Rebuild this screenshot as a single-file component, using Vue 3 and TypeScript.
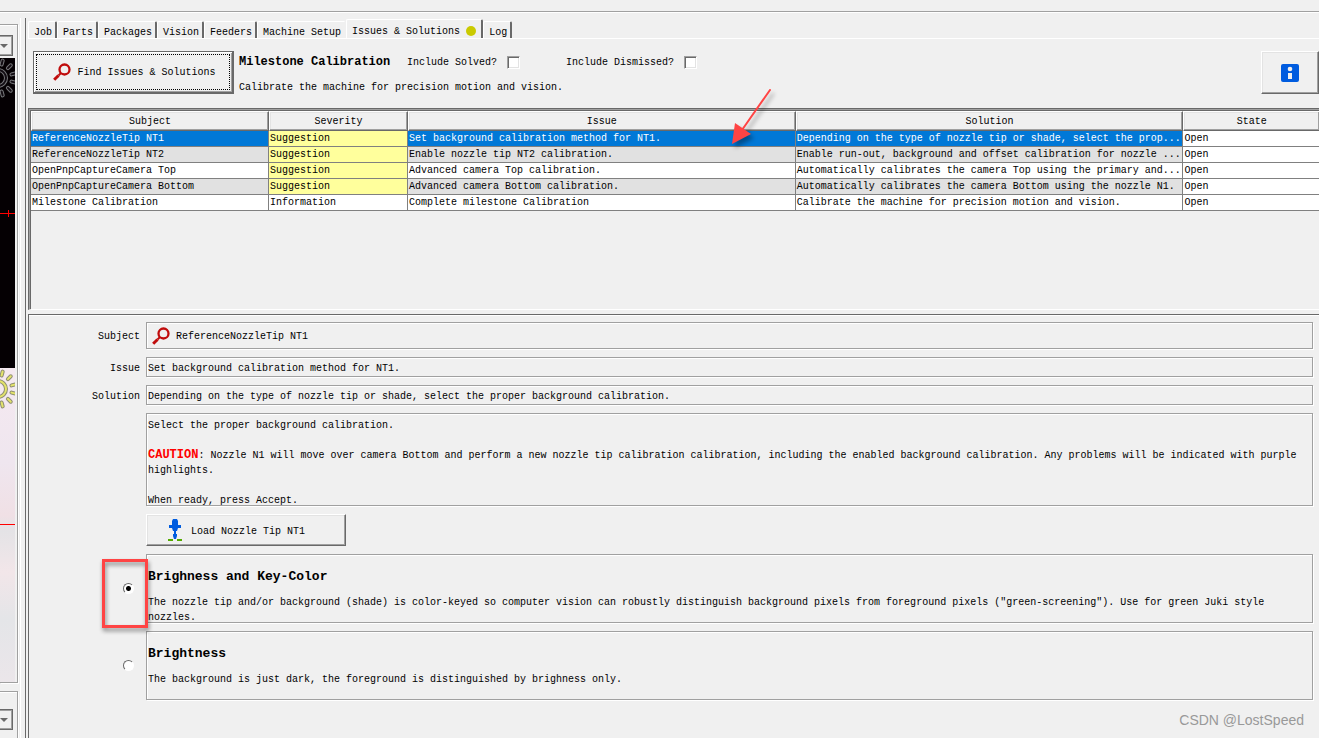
<script setup lang="ts">
import { ref } from 'vue'

interface Issue {
  subject: string
  severity: string
  issue: string
  solution: string
  state: string
}

const tabs: string[] = ['Job', 'Parts', 'Packages', 'Vision', 'Feeders', 'Machine Setup', 'Issues & Solutions', 'Log']
const activeTab = ref('Issues & Solutions')
const selectedRow = ref(0)
const method = ref('key-color')
const includeSolved = ref(false)
const includeDismissed = ref(false)

const issues: Issue[] = [
  { subject: 'ReferenceNozzleTip NT1', severity: 'Suggestion', issue: 'Set background calibration method for NT1.', solution: 'Depending on the type of nozzle tip or shade, select the prop...', state: 'Open' },
  { subject: 'ReferenceNozzleTip NT2', severity: 'Suggestion', issue: 'Enable nozzle tip NT2 calibration.', solution: 'Enable run-out, background and offset calibration for nozzle ...', state: 'Open' },
  { subject: 'OpenPnpCaptureCamera Top', severity: 'Suggestion', issue: 'Advanced camera Top calibration.', solution: 'Automatically calibrates the camera Top using the primary and...', state: 'Open' },
  { subject: 'OpenPnpCaptureCamera Bottom', severity: 'Suggestion', issue: 'Advanced camera Bottom calibration.', solution: 'Automatically calibrates the camera Bottom using the nozzle N1.', state: 'Open' },
  { subject: 'Milestone Calibration', severity: 'Information', issue: 'Complete milestone Calibration', solution: 'Calibrate the machine for precision motion and vision.', state: 'Open' },
]

const rays: number[] = [-75, -45, -15, 15, 45, 75]
</script>

<template>
  <div class="window">
    <div class="toolbar-edge"></div>
    <div class="body">
      <aside class="cameras">
        <div class="camera-box first">
          <button class="combo" type="button" aria-label="Top camera"><svg width="8" height="4" viewBox="0 0 8 4"><path d="M0 0h8L4 4z" fill="#696969" /></svg></button>
          <div class="view dark">
            <svg class="sun" width="15" height="44" viewBox="0 0 15 44" fill="none">
              <g stroke="#77777a">
                <circle cx="-2" cy="20" r="8" stroke-width="4" />
                <path v-for="a in rays" :key="a" d="M12 20h4" stroke-width="4" stroke-linecap="round" :transform="`rotate(${a} -2 20)`" />
              </g>
              <g stroke="#120c12" stroke-width="2">
                <circle cx="-2" cy="20" r="8" />
                <path v-for="a in rays" :key="a" d="M12 20h4" stroke-linecap="round" :transform="`rotate(${a} -2 20)`" />
              </g>
            </svg>
            <svg class="cross" width="15" height="9" viewBox="0 0 15 9" shape-rendering="crispEdges"><path d="M0 4h15v1H0zM8 1h1v7H8z" fill="#f00" /></svg>
          </div>
          <div class="view light">
            <svg class="sun" width="15" height="44" viewBox="0 0 15 44" fill="none">
              <g stroke="#8e8e74">
                <circle cx="-2" cy="21" r="8" stroke-width="4" />
                <path v-for="a in rays" :key="a" d="M12 21h4" stroke-width="4" stroke-linecap="round" :transform="`rotate(${a} -2 21)`" />
              </g>
              <g stroke="#e4e46a" stroke-width="2">
                <circle cx="-2" cy="21" r="8" />
                <path v-for="a in rays" :key="a" d="M12 21h4" stroke-linecap="round" :transform="`rotate(${a} -2 21)`" />
              </g>
            </svg>
            <div class="reticle"></div>
          </div>
        </div>
        <div class="camera-box second">
          <button class="combo" type="button" aria-label="Bottom camera"><svg width="8" height="4" viewBox="0 0 8 4"><path d="M0 0h8L4 4z" fill="#696969" /></svg></button>
        </div>
      </aside>

      <main class="content">
        <nav class="tabs" role="tablist">
          <button v-for="t in tabs" :key="t" class="tab" :class="{ active: t === activeTab }" type="button" role="tab" :aria-selected="t === activeTab" @click="activeTab = t">
            {{ t }}<span v-if="t === 'Issues & Solutions'" class="dot"></span>
          </button>
        </nav>

        <header class="actions">
          <button class="find" type="button">
            <span class="focus">
              <svg width="18" height="18" viewBox="0 0 18 18" fill="none" stroke="#c00c0c"><circle cx="11.500" cy="6.500" r="5" stroke-width="2.300" /><path d="M8 10L5.500 12.500" stroke-width="2" /><path d="M5.500 12.500L1.200 16.800" stroke-width="3" /></svg>
              Find Issues &amp; Solutions
            </span>
          </button>
          <div class="milestone">
            <div class="filters">
              <strong>Milestone Calibration</strong>
              <label class="solved">Include Solved? <input v-model="includeSolved" type="checkbox" /></label>
              <label class="dismissed">Include Dismissed? <input v-model="includeDismissed" type="checkbox" /></label>
            </div>
            <p>Calibrate the machine for precision motion and vision.</p>
          </div>
          <button class="info" type="button" aria-label="Information">
            <svg width="18" height="18" viewBox="0 0 18 18"><rect width="18" height="18" rx="2" fill="#005cdf" /><circle cx="9" cy="5" r="2.300" fill="#f0f0f0" /><path d="M7 9h4v6H7z" fill="#f0f0f0" /></svg>
          </button>
        </header>

        <section class="list">
          <table>
            <colgroup>
              <col class="c-subject" /><col class="c-severity" /><col class="c-text" /><col class="c-text" /><col />
            </colgroup>
            <thead>
              <tr><th>Subject</th><th>Severity</th><th>Issue</th><th>Solution</th><th>State</th></tr>
            </thead>
            <tbody>
              <tr v-for="(row, i) in issues" :key="i" :class="{ selected: i === selectedRow }" @click="selectedRow = i">
                <td>{{ row.subject }}</td>
                <td :class="{ suggestion: row.severity === 'Suggestion' }">{{ row.severity }}</td>
                <td>{{ row.issue }}</td>
                <td>{{ row.solution }}</td>
                <td class="state">{{ row.state }}</td>
              </tr>
            </tbody>
          </table>
          <svg class="arrow" width="60" height="72" viewBox="0 0 60 72">
            <g stroke="#ff4444" fill="#ff4444"><path d="M47 7L19 47" stroke-width="2" stroke-linecap="round" /><path d="M9 61L12 40L28 51z" stroke="none" /></g>
          </svg>
        </section>

        <section class="details">
          <label for="subject">Subject</label>
          <div class="field subject">
            <svg width="18" height="18" viewBox="0 0 18 18" fill="none" stroke="#c00c0c"><circle cx="11.500" cy="6.500" r="5" stroke-width="2.300" /><path d="M8 10L5.500 12.500" stroke-width="2" /><path d="M5.500 12.500L1.200 16.800" stroke-width="3" /></svg>
            <input id="subject" type="text" readonly value="ReferenceNozzleTip NT1" />
          </div>

          <label for="issue">Issue</label>
          <div class="field"><input id="issue" type="text" readonly value="Set background calibration method for NT1." /></div>

          <label for="solution">Solution</label>
          <div class="field"><input id="solution" type="text" readonly value="Depending on the type of nozzle tip or shade, select the proper background calibration." /></div>

          <div class="field prose instructions">
            <p>Select the proper background calibration.</p>
            <p><b>CAUTION</b>: Nozzle N1 will move over camera Bottom and perform a new nozzle tip calibration calibration, including the enabled background calibration. Any problems will be indicated with purple highlights.</p>
            <p>When ready, press Accept.</p>
          </div>

          <button class="load" type="button">
            <svg width="16" height="24" viewBox="0 0 16 24"><path d="M6 0h4l1 2v4h3v3h-3l-1 3H9v3h1v2L9 20H7l-1-3v-2h1v-3H6L5 9H2V6h3V2z" fill="#005cdf" /><path d="M1 20h5v2H1zM10 20h5v2h-5z" fill="#55aa00" /></svg>
            Load Nozzle Tip NT1
          </button>

          <div class="choice">
            <input id="key-color" v-model="method" type="radio" name="method" value="key-color" />
            <span class="marker"></span>
          </div>
          <label class="field prose option" for="key-color">
            <strong>Brighness and Key-Color</strong>
            <span>The nozzle tip and/or background (shade) is color-keyed so computer vision can robustly distinguish background pixels from foreground pixels ("green-screening"). Use for green Juki style nozzles.</span>
          </label>

          <div class="choice">
            <input id="brightness" v-model="method" type="radio" name="method" value="brightness" />
          </div>
          <label class="field prose option" for="brightness">
            <strong>Brightness</strong>
            <span>The background is just dark, the foreground is distinguished by brighness only.</span>
          </label>
        </section>
      </main>
    </div>
    <div class="watermark">CSDN @LostSpeed</div>
  </div>
</template>

<style>
body {
  margin: 0;
  background: #f0f0f0;
}
</style>

<style scoped>
* {
  box-sizing: border-box;
}
.window {
  position: relative;
  display: flex;
  flex-direction: column;
  min-height: 100vh;
  overflow: hidden;
  background: #f0f0f0;
  color: #000;
  font: 10px/15px "Liberation Mono", monospace;
}
button,
input {
  margin: 0;
  font: inherit;
  color: inherit;
}
p {
  margin: 0;
}
svg {
  display: block;
  flex: none;
}
.toolbar-edge {
  height: 12px;
  border-bottom: 1px solid #a0a0a0;
  box-shadow: 0 1px 0 #fff;
}
.body {
  display: flex;
  flex: 1;
}

/* camera column */
.cameras {
  flex: none;
  display: flex;
  flex-direction: column;
  width: 26px;
  margin-top: 6px;
  padding-top: 6px;
  gap: 8px;
  border-right: 1px solid #696969;
  box-shadow: inset -4px 0 0 #f0f0f0, inset -5px 0 0 #fff;
}
.camera-box {
  width: 18px;
  border: 1px solid #a0a0a0;
  border-left: 0;
  box-shadow: inset 0 1px 0 #fff, 1px 1px 0 #fff;
}
.first {
  padding-top: 10px;
}
.second {
  flex: 1;
  border-bottom: 0;
  padding-top: 17px;
}
.combo {
  display: flex;
  align-items: center;
  width: 13px;
  height: 21px;
  padding: 0;
  background: #f0f0f0;
  border: 1px solid #696969;
  border-left: 0;
  box-shadow: inset -1px -1px 0 #a0a0a0, inset 0 1px 0 #a0a0a0;
}
.view {
  position: relative;
  width: 15px;
  overflow: hidden;
}
.dark {
  height: 310px;
  margin-top: 2px;
  background: #050003;
}
.light {
  height: 314px;
  background: linear-gradient(#f5e9f0, #efe6ef 30%, #f0e0e5 47%, #e4e3e6 52%, #f2e6e9 65%, #e4e5e8 80%, #ebe6ea);
}
.sun {
  position: absolute;
  left: 0;
  top: 0;
}
.cross {
  position: absolute;
  left: 0;
  top: 151px;
}
.reticle {
  position: absolute;
  top: 156px;
  width: 100%;
  height: 1px;
  background: #f00;
}

/* tabs */
.content {
  flex: 1;
  min-width: 0;
  display: flex;
  flex-direction: column;
  padding: 7px 0 0 2px;
}
.tabs {
  display: flex;
  align-items: flex-end;
  height: 20px;
}
.tab {
  display: flex;
  align-items: center;
  height: 18px;
  padding: 4px 3px 0 5px;
  background: #f0f0f0;
  border: 0;
  border-top: 1px solid #fff;
  border-left: 1px solid #fff;
  border-right: 2px solid #696969;
  border-radius: 2px 2px 0 0;
  white-space: nowrap;
  border-bottom: 1px solid #fff;
}
.tab:has(+ .active) {
  border-right-color: #f0f0f0;
}
.tab.active {
  height: 20px;
  padding: 4px 5px 0 5px;
  border-bottom-color: #f0f0f0;
}
.dot {
  width: 10px;
  height: 10px;
  margin-left: 6px;
  border-radius: 50%;
  background: #caca00;
}

/* header */
.actions {
  display: flex;
  align-items: flex-start;
  height: 70px;
  padding: 12px 0 0 5px;
  border-top: 1px solid #fff;
  margin-top: -1px;
}
.find {
  flex: none;
  width: 201px;
  height: 43px;
  padding: 2px;
  background: #f0f0f0;
  border: 1px solid #696969;
  border-right-width: 2px;
  border-bottom-width: 2px;
  box-shadow: inset 1px 1px 0 #fff, inset -1px -1px 0 #a0a0a0;
}
.focus {
  display: flex;
  align-items: center;
  justify-content: center;
  gap: 6px;
  height: 100%;
  padding-left: 3px;
  border: 1px dotted #000;
}
.milestone {
  flex: 1;
  padding: 4px 0 0 5px;
}
.filters {
  display: flex;
  align-items: center;
  height: 15px;
  margin-bottom: 10px;
}
.filters strong {
  width: 168px;
  font-size: 12px;
}
.filters label {
  display: flex;
  align-items: center;
  gap: 10px;
}
.solved {
  width: 159px;
}
input[type="checkbox"] {
  appearance: none;
  width: 13px;
  height: 13px;
  background: #fff;
  border: 1px solid #a0a0a0;
  border-right-color: #fff;
  border-bottom-color: #fff;
  box-shadow: inset 1px 1px 0 #696969, inset -1px -1px 0 #e3e3e3;
}
.info {
  flex: none;
  display: flex;
  align-items: center;
  justify-content: center;
  width: 58px;
  height: 43px;
  padding: 0;
  background: #f0f0f0;
  border: 1px solid #fff;
  border-right-color: #696969;
  border-bottom-color: #696969;
  box-shadow: inset -1px -1px 0 #a0a0a0, inset 1px 1px 0 #e3e3e3;
}

/* issue list */
.list {
  position: relative;
  height: 202px;
  border-top: 3px double #696969;
  border-left: 3px double #696969;
  border-bottom: 1px solid #fff;
  background: linear-gradient(#f0f0f0, #f0f0f0) padding-box, #a0a0a0 border-box;
}
table {
  width: 100%;
  table-layout: fixed;
  border-collapse: separate;
  border-spacing: 0;
}
.c-subject {
  width: 238px;
}
.c-severity {
  width: 139px;
}
.c-text {
  width: 30.1%;
}
th {
  height: 20px;
  padding: 1px 0 0;
  font-weight: normal;
  border: 1px solid #fff;
  border-right-color: #696969;
  border-bottom-color: #696969;
  box-shadow: inset -1px -1px 0 #a0a0a0, inset 1px 1px 0 #e3e3e3;
}
td {
  height: 16px;
  padding: 1px 0 0 1px;
  line-height: 14px;
  background: #fff;
  border-right: 1px solid #808080;
  border-bottom: 1px solid #808080;
  overflow: hidden;
  white-space: nowrap;
}
td:last-child,
th:last-child {
  border-right: 0;
}
tr:nth-child(even) td {
  background: #e1e1e1;
}
tr.selected td {
  background: #0078d7;
  color: #fff;
}
tr td.suggestion,
tr:nth-child(even) td.suggestion,
tr.selected td.suggestion {
  background: #ffff9c;
  color: #000;
}
tr td.state,
tr:nth-child(even) td.state,
tr.selected td.state {
  background: #fff;
  color: #000;
}
.arrow {
  position: absolute;
  left: 692px;
  top: -28px;
  filter: drop-shadow(3px 4px 2px rgba(0, 0, 0, 0.35));
}

/* details */
.details {
  flex: 1;
  display: grid;
  grid-template-columns: 111px minmax(0, 1fr);
  grid-auto-rows: max-content;
  column-gap: 6px;
  row-gap: 8px;
  margin-top: 4px;
  padding: 7px 6px 0 0;
  border-top: 1px solid #696969;
  border-left: 1px solid #696969;
  box-shadow: inset 0 1px 0 #fff;
}
.details > label:not(.field) {
  align-self: center;
  padding-top: 2px;
  text-align: right;
}
.field {
  display: flex;
  align-items: center;
  height: 20px;
  border: 1px solid #a0a0a0;
  box-shadow: inset 1px 1px 0 #fff, 1px 1px 0 #fff;
}
.field input {
  flex: 1;
  min-width: 0;
  height: 16px;
  padding: 2px 1px 0;
  border: 0;
  outline: 0;
  background: transparent;
}
.subject {
  height: 27px;
  padding-left: 5px;
  gap: 5px;
}
.prose {
  grid-column: 2;
  display: block;
  overflow: hidden;
}
.instructions {
  height: 93px;
  padding: 4px 8px 0 1px;
}
.instructions p {
  margin-bottom: 15px;
}
.instructions b {
  font-size: 12px;
  line-height: 14px;
  color: #f00;
}
.load {
  grid-column: 2;
  display: flex;
  align-items: center;
  gap: 8px;
  width: 200px;
  height: 32px;
  padding: 2px 0 0 20px;
  background: #f0f0f0;
  border: 1px solid #fff;
  border-right-color: #696969;
  border-bottom-color: #696969;
  box-shadow: inset -1px -1px 0 #a0a0a0, inset 1px 1px 0 #e3e3e3;
}
.choice {
  position: relative;
  display: flex;
  align-items: center;
  justify-content: flex-end;
  padding-right: 6px;
}
.choice input {
  appearance: none;
  width: 11px;
  height: 11px;
  border-radius: 50%;
  border: 1px solid #696969;
  border-right-color: #fff;
  border-bottom-color: #fff;
  background: #fff;
}
.choice input:checked {
  background: radial-gradient(circle, #000 2px, #fff 3px);
}
.marker {
  position: absolute;
  top: 5px;
  right: -8px;
  width: 46px;
  height: 69px;
  border: 3px solid #ff4444;
  filter: drop-shadow(1px 3px 2px rgba(0, 0, 0, 0.45));
  pointer-events: none;
}
.option {
  height: 69px;
  padding: 12px 8px 0 1px;
}
.option strong {
  display: block;
  margin-bottom: 8px;
  font-size: 13px;
  line-height: 20px;
}
.option span {
  display: block;
}
.watermark {
  position: absolute;
  right: 15px;
  bottom: 8px;
  font: 14px/20px "Liberation Sans", sans-serif;
  color: #999;
}
</style>
